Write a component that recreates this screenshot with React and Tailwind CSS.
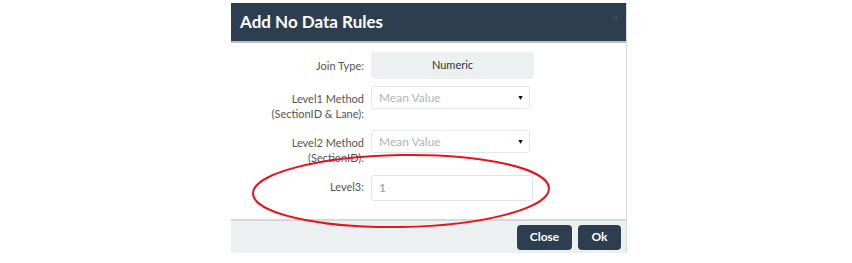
import React from "react";

const Label = ({ children, className = "" }) => (
  <div className={`w-[133px] shrink-0 text-right text-[11px] leading-[15px] text-[#555] ${className}`}>
    {children}
  </div>
);

const FakeSelect = ({ value }) => (
  <div className="ml-[7px] flex h-[23px] w-[159px] items-center justify-between rounded-[3px] border border-[#e3e6e8] bg-white pl-[7px] pr-[5px]">
    <span className="text-[12px] text-[#b0b4b8]">{value}</span>
    <span className="text-[7px] text-black">▼</span>
  </div>
);

export default function App() {
  return (
    <div className="relative h-[263px] w-[852px] overflow-hidden bg-white" style={{ fontFamily: "Lato, 'Open Sans', sans-serif" }}>
      <div className="ml-[231px] mt-[3px] w-[396px] border-r border-[#d6dadd] bg-white">
        {/* header */}
        <div className="relative flex h-[40px] items-center border-b-2 border-[#b8bfc6] bg-[#2c3e50] pl-[9px]">
          <h2 className="text-[17px] font-bold text-white">Add No Data Rules</h2>
          <span className="absolute right-[7px] top-[6px] text-[12px] font-bold text-[#3b4f63]">×</span>
        </div>

        {/* body */}
        <div className="pb-[18px] pt-[9px]">
          <div className="flex items-center">
            <Label>Join Type:</Label>
            <div className="ml-[7px] flex h-[27px] w-[163px] items-center justify-center rounded-[4px] bg-[#ecf0f1] text-[11px] text-[#333]">
              Numeric
            </div>
          </div>

          <div className="mt-[7px] flex items-start">
            <Label className="pt-[5px]">
              Level1 Method
              <br />
              (SectionID &amp; Lane):
            </Label>
            <FakeSelect value="Mean Value" />
          </div>

          <div className="mt-[9px] flex items-start">
            <Label className="pt-[5px]">
              Level2 Method
              <br />
              (SectionID):
            </Label>
            <FakeSelect value="Mean Value" />
          </div>

          <div className="mt-[10px] flex items-center">
            <Label className="-mt-[4px]">Level3:</Label>
            <div className="ml-[7px] flex h-[26px] w-[162px] items-center rounded-[3px] border border-[#dfe3ea] bg-white pl-[7px] text-[12px] text-[#999]">
              1
            </div>
          </div>
        </div>

        {/* footer */}
        <div className="flex h-[34px] items-center justify-end gap-[6px] border-t-2 border-[#d5d9dc] bg-[#ecf0f1] pr-[5px]">
          <button className="h-[25px] w-[55px] rounded-[4px] bg-[#2c3e50] text-[12px] font-bold text-white">Close</button>
          <button className="h-[25px] w-[43px] rounded-[4px] bg-[#2c3e50] text-[12px] font-bold text-white">Ok</button>
        </div>
      </div>

      {/* red annotation ellipse */}
      <svg className="pointer-events-none absolute left-0 top-0" width="852" height="263">
        <ellipse cx="401" cy="191" rx="148" ry="36" fill="none" stroke="#e8141b" strokeWidth="2" transform="rotate(-1 401 191)" />
      </svg>
    </div>
  );
}
